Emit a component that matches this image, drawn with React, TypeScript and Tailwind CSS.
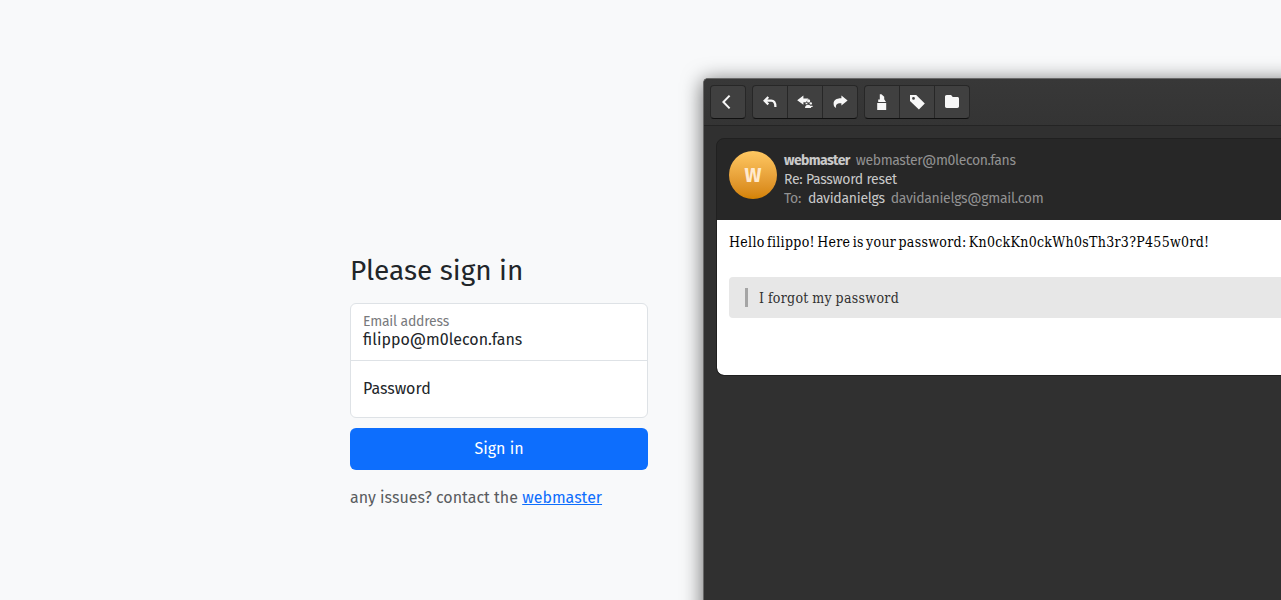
import type { ReactNode } from "react";

const sans = "font-['Fira_Sans','Noto_Sans',sans-serif]";
const slab = "font-['Roboto_Slab','DejaVu_Serif_Condensed','DejaVu_Serif',serif]";

function Glyph({ children }: { children: ReactNode }) {
  return (
    <svg width="16" height="16" viewBox="0 0 16 16" fill="#f7f7f7" className="block">
      {children}
    </svg>
  );
}

function ToolGroup({ items }: { items: ReactNode[] }) {
  return (
    <div className="flex h-[34px] divide-x divide-[#272727] rounded-[4px] border border-[#272727] border-b-[#101010] bg-[#404040]">
      {items.map((item, i) => (
        <button key={i} className="flex w-[35px] items-center justify-center last:w-[34px]">
          {item}
        </button>
      ))}
    </div>
  );
}

const back = (
  <Glyph>
    <path d="M9.6 1.6 3.4 8l6.2 6.4" fill="none" stroke="#f7f7f7" strokeWidth="2" />
  </Glyph>
);
const reply = (
  <Glyph>
    <path d="M6.3 3 2.6 6.7l3.7 3.7M3 6.7h6.2c2.8 0 4.2 1.6 4.2 6.2" fill="none" stroke="#f7f7f7" strokeWidth="2.2" />
  </Glyph>
);
const replyAll = (
  <Glyph>
    <path d="M.2 6.2 6.4 1.6v2.8h5L9 8.2H6.4v2.6z" />
    <circle cx="11.6" cy="6.9" r="1.6" />
    <circle cx="13.8" cy="9.4" r="1.2" />
    <path d="M8 14c.2-4.2 6-4.2 6.2 0zM8.6 8.8h1.8v1.4H8.6zM13.6 11.7h2v1.2h-2z" />
  </Glyph>
);
const forward = (
  <Glyph>
    <path d="M15.6 6.6 9.4 1.6v2.7C4 4.3 1.6 6.4 1.6 9.8c0 2.2.8 3.5 2.6 4.3-1-3.6.9-5.2 5.2-4.9v2.4z" />
  </Glyph>
);
const archive = (
  <Glyph>
    <path d="M3.2 9h9v7h-9zM4.2 8V5.4h1.6V.2h1.6l2.8 2.6v2.4L12 8z" />
  </Glyph>
);
const tag = (
  <Glyph>
    <path fillRule="evenodd" d="M1 1h6.2l8.6 8.6-5.9 6L1 7zM4.5 3a1.4 1.4 0 1 0 0 2.8 1.4 1.4 0 0 0 0-2.8z" />
  </Glyph>
);
const folder = (
  <Glyph>
    <path d="M1 2.8C1 1.7 1.6 1 2.7 1h4.1c.9 0 1.3 2 2.3 2h4.2c1.1 0 1.7.7 1.7 1.7v7.6c0 1.1-.7 1.7-1.7 1.7H2.7c-1 0-1.7-.6-1.7-1.7z" />
  </Glyph>
);

function SignIn() {
  return (
    <form className="mt-[254px] ml-[350px] w-[298px] shrink-0 text-base text-[#212529]">
      <h1 className="mb-4 text-[28px] leading-[33px] whitespace-nowrap">Please sign in</h1>
      <div className="mb-[10px] h-[115px] rounded-[6px] border border-[#dee2e6] bg-white">
        <div className="h-[57px] border-b border-[#dee2e6] px-3 pt-[9px]">
          <div className="text-[14px] leading-[18px] tracking-[-0.2px] text-[#787a7d]">Email address</div>
          <div className="leading-[18px]">filippo@m0lecon.fans</div>
        </div>
        <div className="flex h-[56px] items-center px-3">Password</div>
      </div>
      <button type="button" className="h-[42px] w-full rounded-[6px] bg-[#0d6efd] text-white">
        Sign in
      </button>
      <p className="mt-4 leading-6 whitespace-nowrap text-[#595c5f]">
        any issues? contact the <a className="text-[#0d6efd] underline">webmaster</a>
      </p>
    </form>
  );
}

function MailWindow() {
  return (
    <section className="mt-[78px] ml-[55px] h-[600px] w-[800px] shrink-0 rounded-tl-[5px] border-t border-l border-[#686868] bg-[#303030] shadow-[0_3px_20px_1px_rgba(0,0,0,0.55)]">
      <header className="flex h-[47px] gap-[6px] rounded-tl-[4px] border-b border-[#242424] bg-gradient-to-b from-[#383838] to-[#343434] pt-[6px] pl-[6px]">
        <ToolGroup items={[back]} />
        <ToolGroup items={[reply, replyAll, forward]} />
        <ToolGroup items={[archive, tag, folder]} />
      </header>
      <article className="mt-3 ml-3 h-[238px] overflow-hidden rounded-[8px] border border-[#202020] bg-[#272727]">
        <div className="flex h-[81px] pt-3 pl-3 text-[14px] leading-[19px] whitespace-nowrap">
          <div className="flex size-12 items-center justify-center rounded-full bg-gradient-to-b from-[#ffc861] to-[#d48200] text-[20px] font-bold text-[#ffe9ce]">
            W
          </div>
          <div className="ml-[7px] tracking-[-0.38px] text-[#c9c9c9]">
            <div className="flex gap-[6px]">
              <b className="tracking-[-0.6px]">webmaster</b>
              <span className="text-[#929292]">webmaster@m0lecon.fans</span>
            </div>
            <div className="tracking-[-0.27px]">Re: Password reset</div>
            <div className="flex">
              <span className="mr-[7px] text-[#929292]">To:</span>
              <span className="mr-[6px] tracking-[-0.28px]">davidanielgs</span>
              <span className="text-[#929292] tracking-[-0.3px]">davidanielgs@gmail.com</span>
            </div>
          </div>
        </div>
        <div className={`${slab} h-[155px] rounded-b-[7px] bg-white pt-3 pl-3 text-[14px] leading-[20px] tracking-[0.31px] [word-spacing:-2px] whitespace-nowrap text-black`}>
          <p>Hello filippo! Here is your password: Kn0ckKn0ckWh0sTh3r3?P455w0rd!</p>
          <div className="mt-[25px] flex h-[41px] items-center rounded-[4px] bg-[#e7e7e7] pl-4 text-[#303030]">
            <blockquote className="h-[19px] border-l-[3px] border-[#a5a5a5] pl-[11px] leading-[21px] [word-spacing:-0.7px]">I forgot my password</blockquote>
          </div>
        </div>
      </article>
    </section>
  );
}

export default function App() {
  return (
    <main className={`${sans} flex h-[600px] w-full overflow-hidden bg-[#f8f9fa]`}>
      <SignIn />
      <MailWindow />
    </main>
  );
}
